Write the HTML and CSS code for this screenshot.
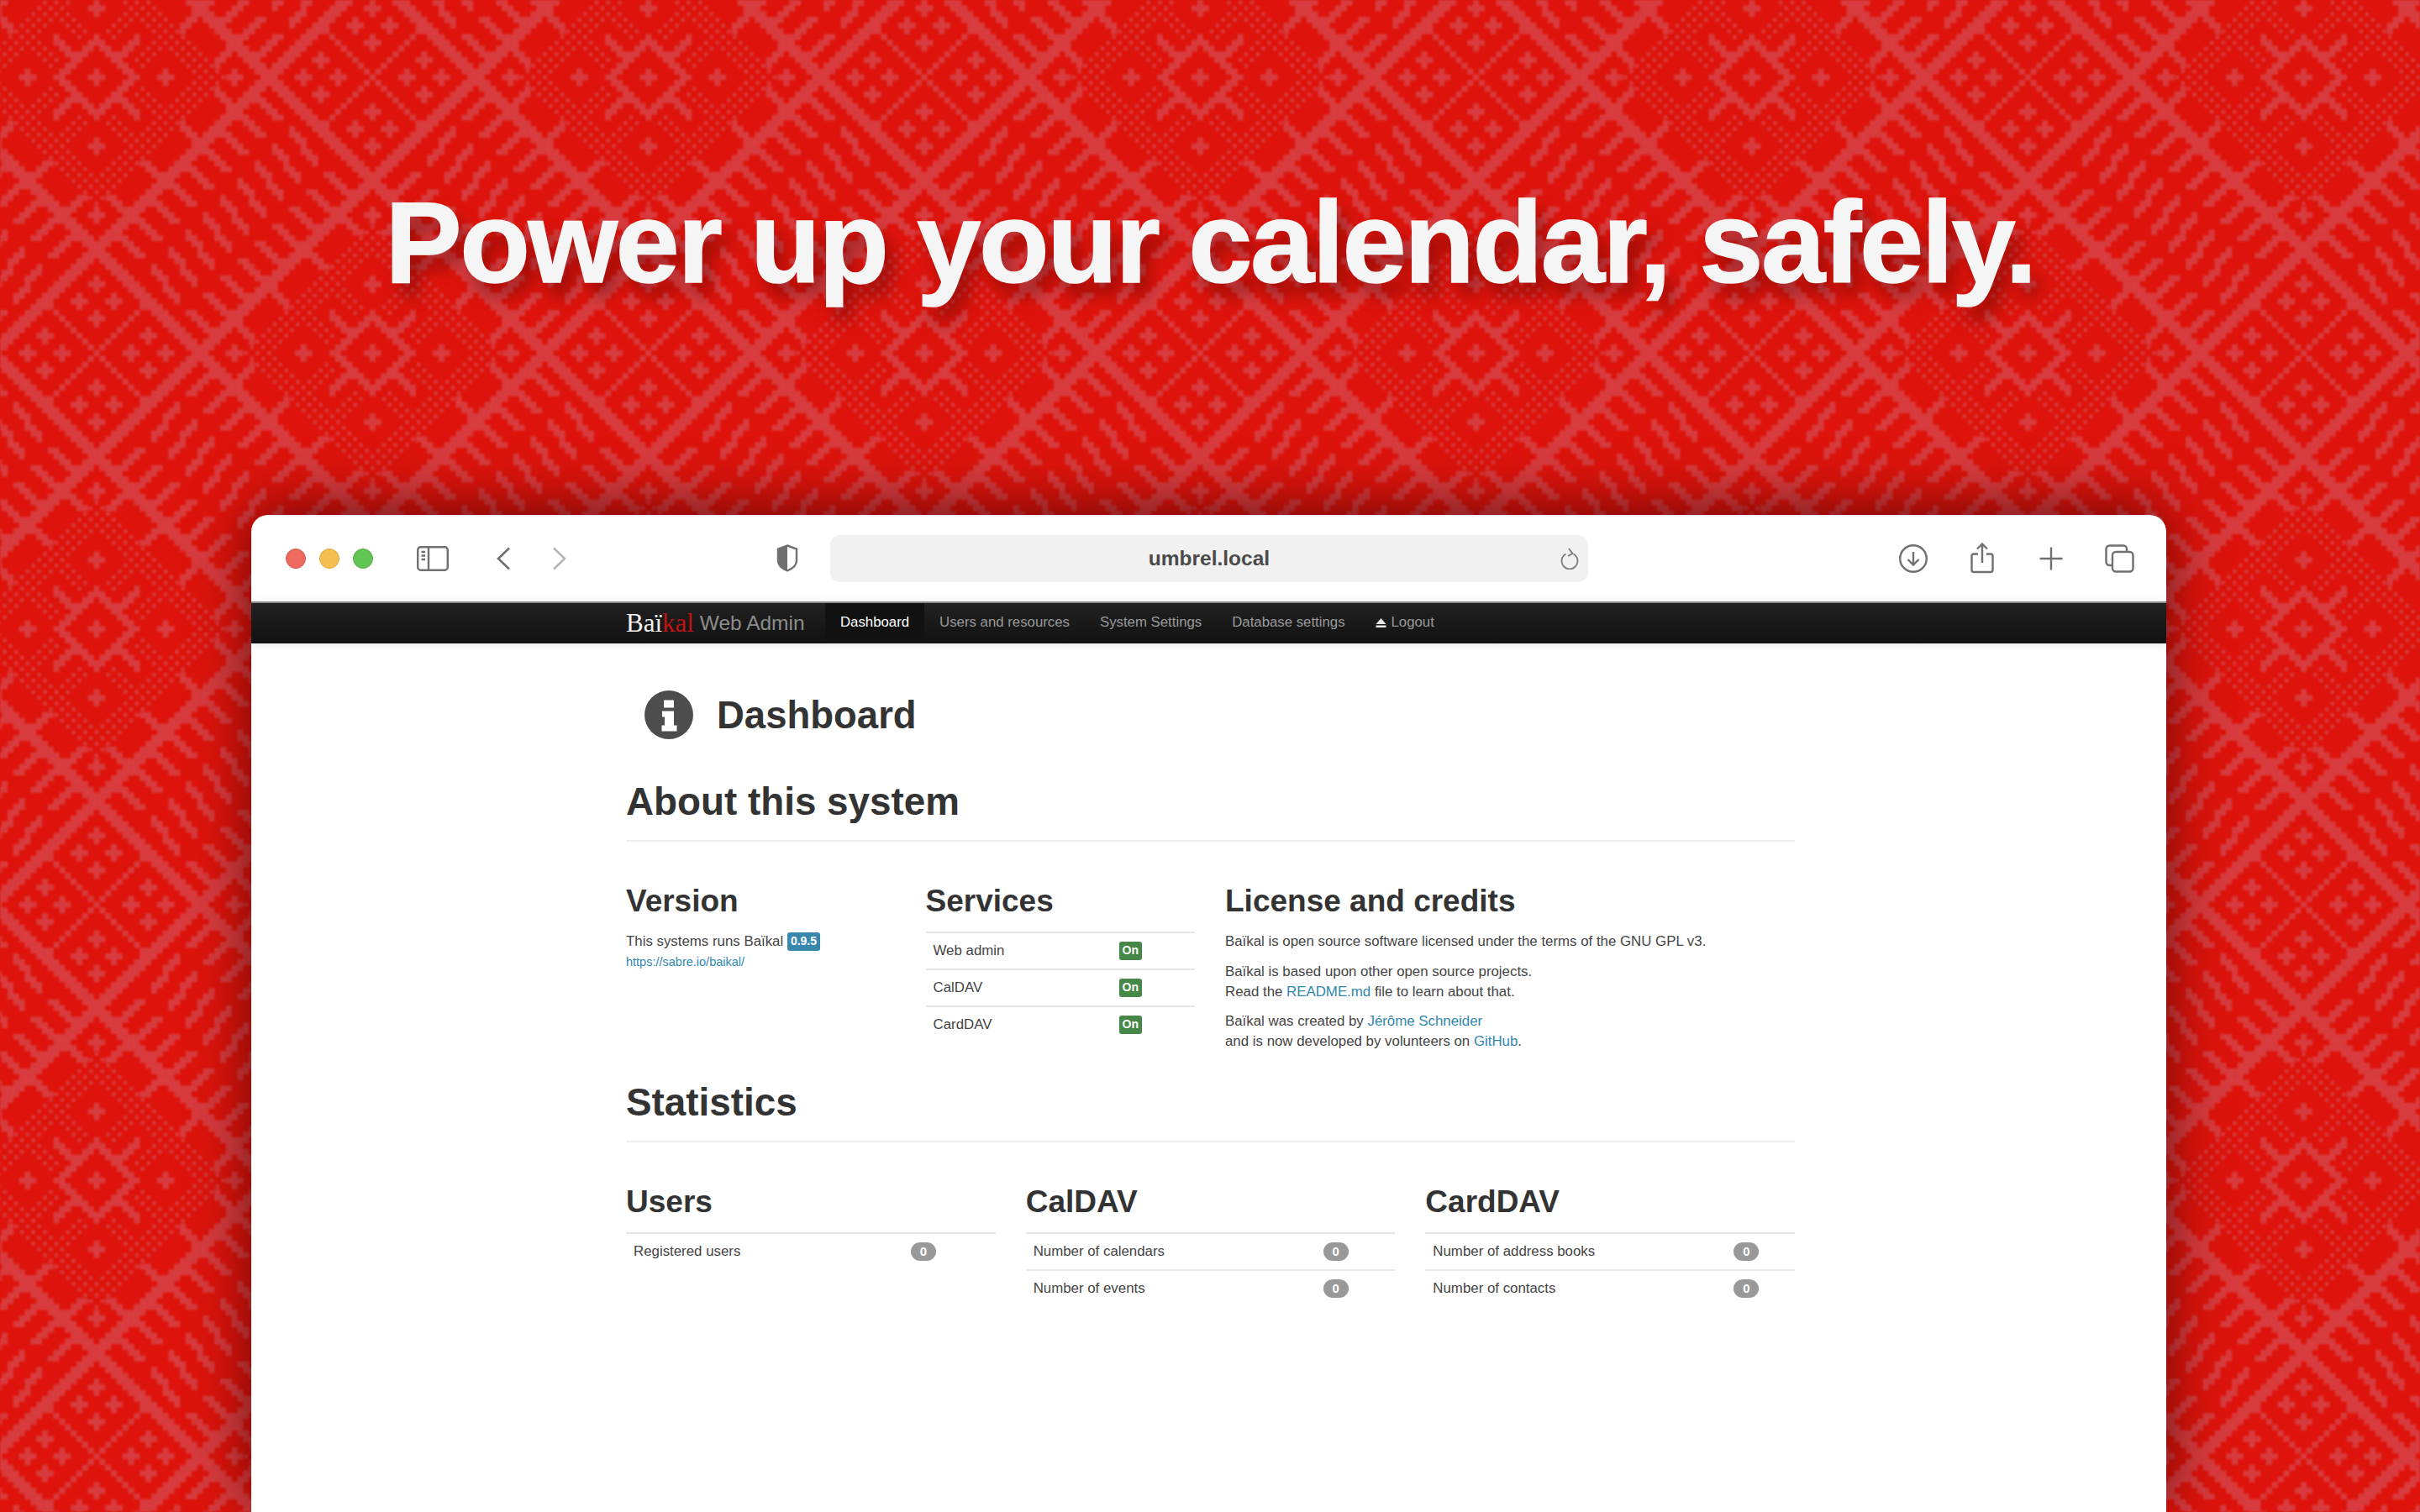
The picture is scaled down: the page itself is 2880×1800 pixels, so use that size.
FILE: index.html
```html
<!DOCTYPE html>
<html lang="en">
<head>
  <meta charset="UTF-8" />
  <title>Baïkal - Power up your calendar, safely.</title>
  <link rel="stylesheet" href="styles.css">
</head>
<body>
  <svg class="weave" aria-hidden="true">
    <defs>
      <pattern id="weaveTile" patternUnits="userSpaceOnUse" width="656.64" height="656.64" patternTransform="translate(111.6 88.6)">
        <path id="weavePath" class="weave-path"></path>
        <path id="weaveDots" class="weave-dots"></path>
      </pattern>
    </defs>
    <rect width="100%" height="100%" fill="url(#weaveTile)"></rect>
  </svg>

  <header class="hero">
    <h1>Power up your calendar, safely.</h1>
  </header>

  <main class="window">
    <div class="toolbar">
      <span class="light light-red"></span>
      <span class="light light-yellow"></span>
      <span class="light light-green"></span>

      <svg class="tool tool-sidebar" viewBox="0 0 38 30">
        <rect x="1.2" y="1.2" width="35.6" height="27.6" rx="3.5"/>
        <path d="M14 1.2v27.6M5.5 7h4.5M5.5 11.5h4.5M5.5 16h4.5"/>
      </svg>
      <svg class="tool tool-back" viewBox="0 0 17 28"><path d="M15 1.5 2 14l13 12.5"/></svg>
      <svg class="tool tool-forward" viewBox="0 0 17 28"><path d="M2 1.5 15 14 2 26.5"/></svg>
      <svg class="tool tool-shield" viewBox="0 0 28 33">
        <path class="fill" d="M14 1.5 3 5.500v14c0 5 5 9.500 11 12z"/>
        <path d="M14 1.500l11 4v14c0 5-5 9.500-11 12-6-2.500-11-7-11-12v-14z"/>
      </svg>

      <div class="url-bar">
        <span>umbrel.local</span>
        <svg class="reload" viewBox="0 0 22 26">
          <path d="M6.500 7.500a9.500 9.500 0 1 0 9 0"/>
          <path d="M10 1l4.500 6-5.500 3"/>
        </svg>
      </div>

      <svg class="tool tool-download" viewBox="0 0 34 34">
        <circle cx="17" cy="17" r="15.800"/>
        <path d="M17 9v15M10.500 18l6.500 6.500 6.500-6.500"/>
      </svg>
      <svg class="tool tool-share" viewBox="0 0 28 37">
        <path d="M9 13.500H4a2.500 2.500 0 0 0-2.500 2.500v16.500A2.500 2.500 0 0 0 4 35h20a2.500 2.500 0 0 0 2.500-2.500V16a2.500 2.500 0 0 0-2.500-2.500h-5"/>
        <path d="M14 24V2M8 7.500 14 1.500l6 6"/>
      </svg>
      <svg class="tool tool-plus" viewBox="0 0 28 28"><path d="M14 0.500v27M0.500 14h27"/></svg>
      <svg class="tool tool-tabs" viewBox="0 0 35 34">
        <path d="M8 25H5.500A4 4 0 0 1 1.500 21V5.500a4 4 0 0 1 4-4H22a4 4 0 0 1 4 4V9"/>
        <rect x="9" y="9" width="24.500" height="23.500" rx="4"/>
      </svg>
    </div>

    <nav class="navbar">
      <a class="brand"><span class="brand-name">Baï<span class="brand-red">kal</span></span> Web Admin</a>
      <a class="nav-item nav-active">Dashboard</a>
      <a class="nav-item">Users and resources</a>
      <a class="nav-item">System Settings</a>
      <a class="nav-item">Database settings</a>
      <a class="nav-item nav-logout">
        <svg class="eject" viewBox="0 0 12 11"><path d="M6 0l6 7H0zM0 8.500h12V11H0z"/></svg>
        Logout
      </a>
    </nav>

    <div class="content">
      <div class="page-head">
        <svg class="info-icon" viewBox="0 0 58 58">
          <circle cx="29" cy="29" r="29"/>
          <path class="info-glyph" d="M23 11.500h12v9H23zM21 24.500h14v17h3.500v7h-18v-7H24v-10h-3z"/>
        </svg>
        <h2 class="page-title">Dashboard</h2>
      </div>

      <h2 class="section-title">About this system</h2>
      <div class="about-row">
        <section>
          <h3>Version</h3>
          <p class="text">This systems runs Baïkal <span class="tag tag-info">0.9.5</span></p>
          <p class="text"><a class="small-link">https://sabre.io/baikal/</a></p>
        </section>
        <section>
          <h3>Services</h3>
          <table class="list services">
            <tr><td>Web admin</td><td><span class="tag tag-on">On</span></td></tr>
            <tr><td>CalDAV</td><td><span class="tag tag-on">On</span></td></tr>
            <tr><td>CardDAV</td><td><span class="tag tag-on">On</span></td></tr>
          </table>
        </section>
        <section>
          <h3>License and credits</h3>
          <p class="text para">Baïkal is open source software licensed under the terms of the GNU GPL v3.</p>
          <p class="text para">Baïkal is based upon other open source projects.<br>Read the <a>README.md</a> file to learn about that.</p>
          <p class="text para">Baïkal was created by <a>Jérôme Schneider</a><br>and is now developed by volunteers on <a>GitHub</a>.</p>
        </section>
      </div>

      <h2 class="section-title stats-title">Statistics</h2>
      <div class="stats-row">
        <section>
          <h3>Users</h3>
          <table class="list stat-users">
            <tr><td>Registered users</td><td><span class="count">0</span></td></tr>
          </table>
        </section>
        <section>
          <h3>CalDAV</h3>
          <table class="list stat-caldav">
            <tr><td>Number of calendars</td><td><span class="count">0</span></td></tr>
            <tr><td>Number of events</td><td><span class="count">0</span></td></tr>
          </table>
        </section>
        <section>
          <h3>CardDAV</h3>
          <table class="list stat-carddav">
            <tr><td>Number of address books</td><td><span class="count">0</span></td></tr>
            <tr><td>Number of contacts</td><td><span class="count">0</span></td></tr>
          </table>
        </section>
      </div>
    </div>
  </main>

  <script src="weave.js"></script>
</body>
</html>
```

FILE: styles.css
```css
* {
  box-sizing: border-box;
}
html, body {
  height: 100%;
}
body {
  margin: 0;
  height: 1800px;
  display: flex;
  flex-direction: column;
  overflow: hidden;
  background: #de140c;
  font-family: "Liberation Sans", Arial, sans-serif;
  color: #333;
}

/* woven background, filled in by weave.js */
.weave {
  position: absolute;
  top: 0;
  left: 0;
  width: 100%;
  height: 100%;
  filter: blur(0.8px);
}
.weave-path {
  fill: #d83b3e;
  stroke: #d83b3e;
  stroke-width: 0.15;
}
.weave-dots {
  fill: #d83b3e;
}

.hero {
  position: relative;
  height: 613px;
  padding-top: 220px;
  flex: none;
}
.hero h1 {
  margin: 0;
  text-align: center;
  font-size: 137px;
  line-height: 137px;
  font-weight: 700;
  letter-spacing: -2.4px;
  color: #f5f5f5;
  -webkit-text-stroke: 1.5px #f5f5f5;
  text-shadow: 10px 16px 20px rgba(50, 0, 0, 0.4);
}

.window {
  position: relative;
  flex: 1;
  margin: 0 302px 0 299px;
  background: #fff;
  border-radius: 20px 20px 0 0;
  box-shadow: 0 -6px 70px rgba(48, 0, 0, 0.68);
}

.toolbar {
  height: 103px;
  display: flex;
  align-items: center;
  padding-left: 41px;
}
.light {
  width: 24px;
  height: 24px;
  border-radius: 50%;
  margin-right: 16px;
  flex: none;
}
.light-red {
  background: #ec6a5e;
  border: 1px solid #d6594f;
}
.light-yellow {
  background: #f4bf4f;
  border: 1px solid #dfa93f;
}
.light-green {
  background: #61c554;
  border: 1px solid #52ad46;
}
.tool {
  flex: none;
  fill: none;
  stroke: #707070;
  stroke-width: 2.4;
}
.tool .fill {
  fill: #707070;
  stroke: none;
}
.tool-sidebar {
  width: 38px;
  height: 30px;
  margin-left: 36px;
}
.tool-back {
  width: 17px;
  height: 28px;
  margin-left: 57px;
  stroke-width: 2.6;
}
.tool-forward {
  width: 17px;
  height: 28px;
  margin-left: 49px;
  stroke: #b5b5b5;
  stroke-width: 2.6;
}
.tool-shield {
  width: 28px;
  height: 33px;
  margin-left: 249px;
}
.url-bar {
  position: relative;
  width: 902px;
  height: 56px;
  margin-left: 37px;
  flex: none;
  display: flex;
  align-items: center;
  justify-content: center;
  background: #f1f1f1;
  border-radius: 12px;
  font-size: 24.500px;
  font-weight: 700;
  color: #4a4a4a;
}
.reload {
  position: absolute;
  right: 11px;
  top: 15px;
  width: 22px;
  height: 26px;
  fill: none;
  stroke: #7a7a7a;
  stroke-width: 1.8;
}
.tool-download {
  width: 34px;
  height: 34px;
  margin-left: 369.500px;
}
.tool-share {
  width: 28px;
  height: 37px;
  margin-left: 51px;
}
.tool-plus {
  width: 28px;
  height: 28px;
  margin-left: 54px;
}
.tool-tabs {
  width: 35px;
  height: 34px;
  margin-left: 50px;
}

.navbar {
  height: 50px;
  display: flex;
  align-items: stretch;
  padding-left: 446px;
  background: linear-gradient(#222, #111);
  border-top: 2px solid #8a8a8a;
  box-shadow: 0 2px 10px rgba(0, 0, 0, 0.1);
  position: relative;
}
.brand {
  width: 237px;
  display: flex;
  align-items: center;
  white-space: pre;
  font-size: 24.500px;
  color: #8c8c8c;
}
.brand-name {
  font-family: "Liberation Serif", serif;
  font-size: 31px;
  color: #f2f2f2;
}
.brand-red {
  color: #c01313;
}
.nav-item {
  display: flex;
  align-items: center;
  padding: 0 18px 2px;
  font-size: 16.800px;
  color: #999;
}
.nav-active {
  background: #111;
  color: #fff;
}
.eject {
  width: 13px;
  height: 11px;
  margin-right: 6px;
  fill: #e8e8e8;
}

.content {
  width: 1391px;
  margin-left: 446px;
}
.page-head {
  display: flex;
  align-items: center;
  height: 58px;
  margin-top: 56px;
  padding-left: 22px;
}
.info-icon {
  width: 58px;
  height: 58px;
  margin-right: 28px;
  fill: #4d4d4d;
}
.info-glyph {
  fill: #fff;
}
.page-title {
  margin: 0;
  padding-top: 2px;
  font-size: 45.500px;
  line-height: 58px;
}
.section-title {
  margin: 50px 0 0;
  font-size: 45.800px;
  line-height: 50px;
  padding-bottom: 20px;
  border-bottom: 2px solid #eee;
}
.stats-title {
  margin-top: 24.500px;
}
h3 {
  margin: 51px 0 16px;
  font-size: 37px;
  line-height: 40px;
}
.about-row {
  display: grid;
  grid-template-columns: 320px 320px 1fr;
  column-gap: 36.500px;
}
.stats-row {
  display: grid;
  grid-template-columns: repeat(3, 1fr);
  column-gap: 36px;
}
.text {
  margin: 0;
  font-size: 16.850px;
  line-height: 24px;
  color: #444;
}
.para {
  margin-bottom: 11.500px;
}
a {
  color: #2f88ad;
}
.small-link {
  font-size: 14.500px;
}
.tag {
  display: inline-block;
  height: 22px;
  padding: 0 4px;
  border-radius: 3px;
  font-size: 14px;
  line-height: 21px;
  font-weight: 700;
  color: #fff;
  vertical-align: 1px;
}
.tag-info {
  background: #3a87ad;
}
.tag-on {
  background: #468847;
}
.count {
  display: block;
  width: 30px;
  height: 22px;
  border-radius: 11px;
  background: #999;
  color: #fff;
  font-size: 15px;
  line-height: 22px;
  font-weight: 700;
  text-align: center;
}
.list {
  width: 100%;
  table-layout: fixed;
  border-collapse: separate;
  border-spacing: 0;
  font-size: 16.850px;
  color: #444;
}
.list td {
  height: 44px;
  padding: 0;
  border-top: 2px solid #e6e6e6;
  vertical-align: middle;
}
.list td:first-child {
  padding-left: 9px;
}
.services td:first-child {
  width: 230px;
}
.stat-users td:first-child {
  width: 339px;
}
.stat-caldav td:first-child {
  width: 354px;
}
.stat-carddav td:first-child {
  width: 367px;
}
```

FILE: weave.js
```js
// Draws one tile of the woven background as svg paths.
const CELL = 6.84;
const TILE = 96;

function isCross(x, y, cx, cy) {
  return Math.abs(x - cx) + Math.abs(y - cy) <= 1;
}

function nearPoint(x, y, cx, cy, r) {
  return Math.abs(x - cx) + Math.abs(y - cy) <= r;
}

// 0 = nothing, 1 = full cell, 2 = small dot
function cellAt(rawX, rawY) {
  let x = Math.min(rawX, TILE - rawX);
  let y = Math.min(rawY, TILE - rawY);
  if (x + y > 48) {
    x = 48 - x;
    y = 48 - y;
  }
  const p = x + y;
  const q = x - y;
  const aq = Math.abs(q);

  // big diamond round the dotted centre
  if (p < 29) {
    if (isCross(x, y, 0, 0) || isCross(x, y, 12, 0) || isCross(x, y, 0, 12)) return 1;
    if (isCross(x, y, 24, 0) || isCross(x, y, 0, 24)) return 1;
    if (p === 6 || p === 7) return 1;
    if (p >= 8 && p <= 14 && (q === 0 || q === 1)) return 1;
    if (p >= 23 && (aq === 6 || aq === 7 || aq === 18 || aq === 19)) return 1;
    if (p >= 10 && p <= 22 && p % 2 === 0) {
      if (nearPoint(x, y, 12, 0, 4) || nearPoint(x, y, 0, 12, 4)) return 0;
      if (aq <= 2 && p <= 16) return 0;
      return 2;
    }
    return 0;
  }

  // main lattice lines
  if (p <= 31 || (aq >= 29 && aq <= 31)) return 1;

  // hatched strips between the diamonds
  if (aq < 29) {
    const m = ((q % 6) + 6) % 6;
    if (aq >= 27 || (p > 39 && p < 43)) return 0;
    return m === 0 || m === 1 ? 1 : 0;
  }

  // small diamond with the thin cross
  const dx = q > 0 ? 48 - x : x;
  const dy = q > 0 ? y : 48 - y;
  if (dx === dy) return 1;
  const spots = [[6, 0], [12, 0], [9, 3], [0, 6], [0, 12], [3, 9]];
  return spots.some(s => isCross(dx, dy, s[0], s[1])) ? 1 : 0;
}

let cells = '';
let dots = '';
for (let y = 0; y < TILE; y++) {
  for (let x = 0; x < TILE; x++) {
    const kind = cellAt(x, y);
    if (kind === 1) {
      cells += `M${(x * CELL).toFixed(2)} ${(y * CELL).toFixed(2)}h${CELL}v${CELL}h-${CELL}z`;
    } else if (kind === 2) {
      dots += `M${(x * CELL + 1.2).toFixed(2)} ${(y * CELL + 1.2).toFixed(2)}h4.4v4.4h-4.4z`;
    }
  }
}
document.getElementById('weavePath').setAttribute('d', cells);
document.getElementById('weaveDots').setAttribute('d', dots);
```
